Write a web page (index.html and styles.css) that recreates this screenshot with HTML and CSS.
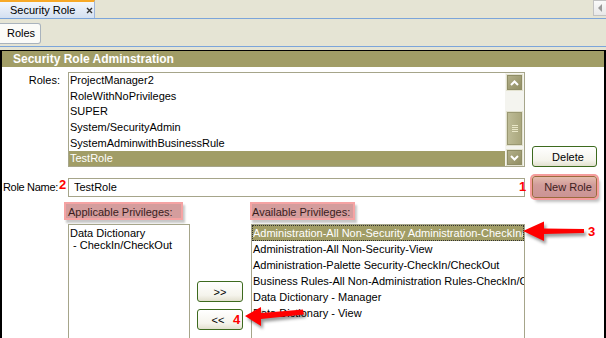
FILE: index.html
```html
<!DOCTYPE html>
<html lang="en">
<head>
  <meta charset="UTF-8" />
  <title>Security Role</title>
  <link rel="stylesheet" href="styles.css">
</head>
<body>
  <div class="tabbar">
    <div class="doc-tab">
      <span>Security Role</span>
      <svg class="close" width="7" height="7" viewBox="0 0 7 7"><path d="M1 1L6 6M6 1L1 6" stroke="#333" stroke-width="1.4"/></svg>
    </div>
    <div class="tab-scroll">
      <svg width="5" height="8" viewBox="0 0 5 8"><path d="M4 0V8L0 4Z" fill="#999"/></svg>
    </div>
  </div>
  <div class="subbar">
    <div class="sub-tab">Roles</div>
  </div>

  <div class="panel">
    <div class="panel-title">Security Role Adminstration</div>

    <div class="row roles-row">
      <div class="lbl lbl-top">Roles:</div>
      <div class="listbox roles-list">
        <ul class="items">
          <li>ProjectManager2</li>
          <li>RoleWithNoPrivileges</li>
          <li>SUPER</li>
          <li>System/SecurityAdmin</li>
          <li>SystemAdminwithBusinessRule</li>
          <li class="sel">TestRole</li>
        </ul>
        <div class="vscroll">
          <div class="sb-btn">
            <svg width="9" height="6" viewBox="0 0 9 6"><path d="M1 5L4.5 1.5L8 5" stroke="#fff" stroke-width="2" fill="none"/></svg>
          </div>
          <div class="sb-track"><div class="sb-thumb"><i></i><i></i><i></i><i></i></div></div>
          <div class="sb-btn">
            <svg width="9" height="6" viewBox="0 0 9 6"><path d="M1 1L4.5 4.5L8 1" stroke="#fff" stroke-width="2" fill="none"/></svg>
          </div>
        </div>
      </div>
      <button class="btn side-btn">Delete</button>
    </div>

    <div class="row name-row">
      <div class="lbl name-lbl">Role Name:<span class="mark mark-2">2</span></div>
      <div class="field">
        <input class="text-input" type="text" value="TestRole">
        <span class="mark mark-1">1</span>
      </div>
      <button class="btn side-btn hl-btn">New Role</button>
    </div>

    <div class="priv">
      <div class="priv-lbl hl applicable-lbl">Applicable Privileges:</div>
      <div></div>
      <div class="priv-lbl hl available-lbl">Available Privileges:</div>

      <div class="listbox applicable">
        <div class="wrap-text">Data Dictionary<br>&nbsp;- CheckIn/CheckOut</div>
      </div>
      <div class="move-btns">
        <button class="btn move">&gt;&gt;</button>
        <button class="btn move back">&lt;&lt;<span class="mark mark-4">4</span></button>
      </div>
      <div class="listbox available">
        <ul class="items">
          <li class="sel focus">Administration-All Non-Security Administration-CheckIn/CheckOut</li>
          <li>Administration-All Non-Security-View</li>
          <li>Administration-Palette Security-CheckIn/CheckOut</li>
          <li>Business Rules-All Non-Administration Rules-CheckIn/CheckOut</li>
          <li>Data Dictionary - Manager</li>
          <li>Data Dictionary - View</li>
        </ul>
      </div>
    </div>
  </div>

  <!-- callout arrows drawn over the screenshot -->
  <svg class="arrow arrow-3" width="70" height="28" viewBox="0 0 70 28">
    <path d="M3 12L24 2.5L24 9.5L64 10L64 14L24 15L24 22Z" fill="#f00"/>
  </svg>
  <span class="mark mark-3">3</span>
  <svg class="arrow arrow-4" width="68" height="30" viewBox="0 0 68 30">
    <path d="M3 14L19 5L19 11L61 7.5L62 12.5L19 17L19 24Z" fill="#f00"/>
  </svg>
</body>
</html>
```

FILE: styles.css
```css
body {
  margin: 0;
  width: 606px;
  height: 338px;
  overflow: hidden;
  position: relative;
  background-color: #e5e4d4;
  font-family: 'Liberation Sans', Arial, sans-serif;
  font-size: 11px;
  color: #000;
}
.tabbar {
  height: 18px;
  border-bottom: 1px solid #7ca5da;
  display: flex;
  justify-content: space-between;
  align-items: flex-start;
}
.doc-tab {
  width: 95px;
  height: 18px;
  box-sizing: border-box;
  border-top: 2px solid #f7a928;
  border-right: 1px solid #9db6dc;
  background: linear-gradient(#f3f7fc, #d4e0f1);
  padding-left: 10px;
  display: flex;
  align-items: center;
  gap: 11px;
}
.tab-scroll {
  width: 12px;
  height: 14px;
  border: 1px solid #c2c2c2;
  border-right: none;
  background: linear-gradient(#fafafa, #e8e8e8);
  display: flex;
  align-items: center;
  justify-content: center;
}
.subbar {
  height: 23px;
  padding-top: 4px;
  border-bottom: 1px solid #7ca5da;
}
.sub-tab {
  width: 41px;
  height: 21px;
  box-sizing: border-box;
  border: 1px solid #a9b3bd;
  border-left: none;
  border-radius: 0 3px 3px 0;
  background: #fbfbf8;
  padding-left: 7px;
  line-height: 19px;
}
.panel {
  margin-top: 3px;
  height: 300px;
  border: 2px solid #000;
  border-top-width: 1px;
  border-bottom: none;
  background: #fff;
}
.panel-title {
  height: 16px;
  line-height: 16px;
  padding-left: 11px;
  background-color: #a19d66;
  color: #fff;
  font-weight: bold;
  font-size: 12px;
}
.row {
  display: flex;
  align-items: flex-end;
}
.lbl {
  position: relative;
  flex: none;
  width: 58px;
  padding-right: 8px;
  text-align: right;
  white-space: nowrap;
}
.name-lbl {
  width: 56px;
  padding-right: 10px;
  letter-spacing: -0.3px;
}
.lbl-top {
  align-self: flex-start;
  line-height: 17px;
}
.roles-row {
  margin-top: 5px;
}
.listbox {
  box-sizing: border-box;
  border: 1px solid #a6a58a;
  background: #fff;
  overflow: hidden;
}
.roles-list {
  width: 457px;
  height: 95px;
  display: flex;
}
.items {
  flex: 1;
  list-style: none;
  margin: 0;
  padding: 0;
  min-width: 0;
}
.items li {
  white-space: nowrap;
  overflow: hidden;
  padding-left: 1px;
}
.roles-list .items li {
  height: 15.66px;
  line-height: 15.66px;
}
.items li.sel {
  background-color: #a19d66;
  color: #fff;
}
.vscroll {
  width: 19px;
  padding: 1px 1px 0 1px;
  box-sizing: border-box;
  display: flex;
  flex-direction: column;
  background: #f4f4ef;
}
.sb-btn {
  height: 17px;
  box-sizing: border-box;
  border: 1px solid #e3e2cf;
  outline: 1px solid #8f8d66;
  outline-offset: -2px;
  background: linear-gradient(135deg, #b4b18c, #8f8c60);
  display: flex;
  align-items: center;
  justify-content: center;
}
.sb-track {
  flex: 1;
  padding-top: 20px;
}
.sb-thumb {
  height: 35px;
  box-sizing: border-box;
  border: 1px solid #e3e2cf;
  outline: 1px solid #9a9872;
  outline-offset: -2px;
  background: linear-gradient(90deg, #bfbd98, #a9a67c);
  display: flex;
  flex-direction: column;
  justify-content: center;
  align-items: center;
  gap: 1px;
}
.sb-thumb i {
  width: 6px;
  height: 1px;
  background: #e9e7c7;
}
.btn {
  flex: none;
  box-sizing: border-box;
  height: 21px;
  border: 1px solid #3d6a1e;
  border-radius: 3px;
  background: linear-gradient(#ffffff, #f5f4ec 70%, #e2e0cf);
  font-family: 'Liberation Sans', Arial, sans-serif;
  font-size: 11px;
  color: #000;
  padding: 0;
}
.side-btn {
  width: 65px;
  margin-left: 7px;
  padding-left: 7px;
}
.name-row {
  margin-top: 9px;
  align-items: center;
}
.field {
  position: relative;
}
.text-input {
  display: block;
  width: 457px;
  height: 19px;
  box-sizing: border-box;
  border: 1px solid #a6a58a;
  padding: 0 0 1px 5px;
  font-family: 'Liberation Sans', Arial, sans-serif;
  font-size: 11px;
}
.hl-btn {
  height: 22px;
  border-color: #9c6a3c;
  color: #3d1d1d;
  background: linear-gradient(#e4bcae, #d19c9a 40%, #cb9494);
  box-shadow: 0 0 0 2px #f59c9c, 3px 4px 3px rgba(0, 0, 0, 0.25);
}
.priv {
  display: grid;
  grid-template-columns: 129px 54px 274px;
  grid-template-rows: 18px auto;
  row-gap: 4px;
  padding-left: 66px;
  margin-top: 4px;
}
.priv-lbl {
  height: 18px;
  line-height: 16px;
  box-sizing: border-box;
  white-space: nowrap;
}
.hl {
  border: 2px solid #f5a3a3;
  background: #d49d9d;
  color: #3a1c1c;
  box-shadow: 2px 3px 2px rgba(0, 0, 0, 0.22);
}
.applicable-lbl {
  width: 119px;
  margin-left: -4px;
  padding-left: 2px;
}
.available-lbl {
  width: 105px;
  margin-left: -1px;
  padding-left: 0;
}
.applicable {
  width: 122px;
  height: 120px;
}
.wrap-text {
  padding: 2px 0 0 1px;
  line-height: 12px;
}
.move-btns {
  display: flex;
  flex-direction: column;
  gap: 7px;
  padding-top: 57px;
}
.move {
  width: 46px;
}
.move.back {
  position: relative;
  padding-right: 4px;
}
.available {
  width: 274px;
  height: 120px;
}
.available .items li {
  height: 16px;
  line-height: 16px;
}
.available .items li.focus {
  box-sizing: border-box;
  border: 1px dotted #333;
  line-height: 14px;
  padding-left: 0;
}
.mark {
  position: absolute;
  color: #f00;
  font-weight: bold;
  font-size: 13px;
  line-height: 13px;
  letter-spacing: 0;
}
.mark-2 {
  left: 57px;
  top: -3px;
}
.mark-1 {
  left: 451px;
  top: 2px;
}
.mark-4 {
  left: 35px;
  top: 3px;
}
.mark-3 {
  left: 588px;
  top: 225px;
}
.arrow {
  position: absolute;
  filter: drop-shadow(2px 3px 1.5px rgba(0, 0, 0, 0.4));
}
.arrow-3 {
  left: 520px;
  top: 219px;
}
.arrow-4 {
  left: 242px;
  top: 302px;
}
```
